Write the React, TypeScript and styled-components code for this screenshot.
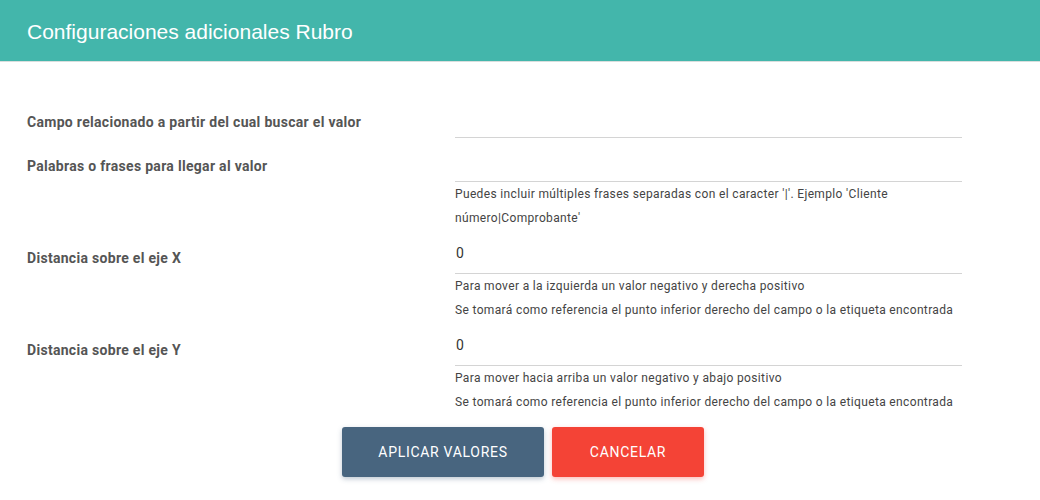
import styled, { createGlobalStyle } from 'styled-components';

const GlobalStyle = createGlobalStyle`
  body {
    margin: 0;
    background: #ffffff;
    font-family: Roboto, "Liberation Sans", Arial, sans-serif;
  }
`;

const Dialog = styled.div`
  width: 1040px;
  height: 500px;
  background: #ffffff;
  overflow: hidden;
`;

const Header = styled.div`
  height: 62px;
  background: #43b6ab;
  border-bottom: 1px solid #d9dedd;
  display: flex;
  align-items: center;
  padding: 0 27px;
  box-sizing: border-box;
`;

const Title = styled.h2`
  margin: 0;
  padding-top: 2px;
  color: #ffffff;
  font-family: "Liberation Sans", Arial, sans-serif;
  font-size: 21px;
  font-weight: 400;
`;

const Form = styled.div`
  padding: 32px 0 0 27px;
  display: flex;
  flex-direction: column;
`;

const Row = styled.div`
  display: grid;
  grid-template-columns: 428px 507px;
`;

const Label = styled.label`
  padding-top: 18px;
  line-height: 20px;
  font-size: 14px;
  font-weight: 700;
  letter-spacing: 0.3px;
  color: #555555;
`;

const Field = styled.div`
  display: flex;
  flex-direction: column;
`;

const Input = styled.input`
  height: 44px;
  box-sizing: border-box;
  border: none;
  border-bottom: 1px solid #d4d4d4;
  padding: 2px 0 0 1px;
  font-family: Roboto, "Liberation Sans", Arial, sans-serif;
  font-size: 14px;
  color: #333333;
  outline: none;
  background: transparent;
`;

const Help = styled.p`
  margin: 0;
  font-size: 12px;
  line-height: 24px;
  letter-spacing: 0.35px;
  color: #444444;
`;

const Actions = styled.div`
  display: flex;
  justify-content: center;
  gap: 8px;
  padding: 13px 0 0 6px;
`;

const Button = styled.button<{ $variant: 'primary' | 'danger' }>`
  height: 50px;
  width: ${(p) => (p.$variant === 'primary' ? '202px' : '152px')};
  border: none;
  border-radius: 3px;
  background: ${(p) => (p.$variant === 'primary' ? '#48657f' : '#f44336')};
  color: #ffffff;
  font-family: Roboto, "Liberation Sans", Arial, sans-serif;
  font-size: 14px;
  letter-spacing: 0.7px;
  text-transform: uppercase;
  cursor: pointer;
  box-shadow: 0 2px 5px
    ${(p) => (p.$variant === 'primary' ? 'rgba(72, 101, 127, 0.35)' : 'rgba(244, 67, 54, 0.35)')};
`;

const fields = [
  { label: 'Campo relacionado a partir del cual buscar el valor', value: '', help: [] as string[] },
  {
    label: 'Palabras o frases para llegar al valor',
    value: '',
    help: ["Puedes incluir múltiples frases separadas con el caracter '|'. Ejemplo 'Cliente número|Comprobante'"],
  },
  {
    label: 'Distancia sobre el eje X',
    value: '0',
    help: [
      'Para mover a la izquierda un valor negativo y derecha positivo',
      'Se tomará como referencia el punto inferior derecho del campo o la etiqueta encontrada',
    ],
  },
  {
    label: 'Distancia sobre el eje Y',
    value: '0',
    help: [
      'Para mover hacia arriba un valor negativo y abajo positivo',
      'Se tomará como referencia el punto inferior derecho del campo o la etiqueta encontrada',
    ],
  },
];

export default function App() {
  return (
    <Dialog>
      <GlobalStyle />
      <Header>
        <Title>Configuraciones adicionales Rubro</Title>
      </Header>
      <Form>
        {fields.map((f) => (
          <Row key={f.label}>
            <Label>{f.label}</Label>
            <Field>
              <Input defaultValue={f.value} />
              {f.help.map((h) => (
                <Help key={h}>{h}</Help>
              ))}
            </Field>
          </Row>
        ))}
      </Form>
      <Actions>
        <Button $variant="primary">Aplicar valores</Button>
        <Button $variant="danger">Cancelar</Button>
      </Actions>
    </Dialog>
  );
}
